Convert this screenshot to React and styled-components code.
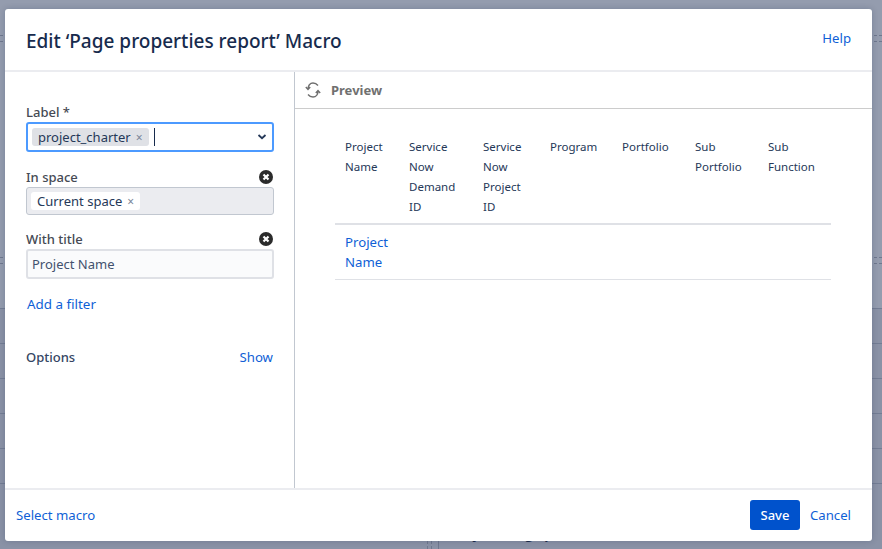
import React from 'react'
import styled, { createGlobalStyle } from 'styled-components'

const Global = createGlobalStyle`
    html, body {
        margin: 0;
        padding: 0;
        height: 100%;
        overflow: hidden;
    }
    body {
        font-family: "Noto Sans", "Open Sans", sans-serif;
        color: #253858;
    }
`

const Backdrop = styled.div`
    position: relative;
    width: 882px;
    height: 549px;
    background: #949cae;
    padding: 9px 10px 8px 5px;
    box-sizing: border-box;
    overflow: hidden;
`

// the page that sits greyed out behind the dialog
const PageBehind = styled.div`
    position: absolute;
    inset: 0;
`

const Dashes = styled.div`
    position: absolute;
    left: 0;
    right: 0;
    top: ${props => props.y}px;
    height: 5px;
    border-top: 1px dashed #6f788e;
    border-bottom: 1px dashed #6f788e;
`

const Rows = styled.div`
    position: absolute;
    left: 0;
    right: 0;
    top: 308px;
    bottom: 0;
    background: #8a92a6;
`

const Row = styled.div`
    height: 34px;
    border-top: 1px solid #737d94;
`

const BehindText = styled.span`
    position: absolute;
    left: 455px;
    top: 522px;
    font-size: 14px;
    font-weight: 700;
    line-height: 24px;
    color: #1c2b4a;
    white-space: nowrap;
`

const Rule = styled.div`
    position: absolute;
    top: 541px;
    bottom: 0;
    left: ${props => props.x}px;
    border-left: 1px ${props => props.dashed ? 'dashed' : 'solid'} #6f788e;
`

const Dialog = styled.div`
    position: relative;
    display: flex;
    flex-direction: column;
    height: 100%;
    background: #fff;
    border-radius: 3px;
    box-shadow: 0 0 6px rgba(9, 30, 66, 0.2);
    overflow: hidden;
`

const Header = styled.header`
    display: flex;
    justify-content: space-between;
    align-items: center;
    height: 58px;
    padding: 3px 21px 0;
    border-bottom: 2px solid #ebecf0;
    flex: none;
`

const Title = styled.h2`
    margin: 0;
    font-size: 19px;
    font-weight: 500;
    color: #172b4d;
`

const Link = styled.a`
    font-size: 13.2px;
    font-weight: 400;
    color: #0f5fd6;
    cursor: pointer;
`

const HelpLink = styled(Link)`
    margin-bottom: 7px;
`

const FilterLink = styled(Link)`
    display: block;
    margin: 16px 0 0 1px;
    font-size: 13.4px;
`

const Body = styled.div`
    display: flex;
    flex: 1;
    min-height: 0;
`

const Sidebar = styled.aside`
    width: 290px;
    flex: none;
    box-sizing: border-box;
    border-right: 1px solid #c1c7d0;
    padding: 30px 20px 0 21px;
`

const FieldHead = styled.div`
    display: flex;
    justify-content: space-between;
    align-items: center;
    height: 20px;
    font-size: 13px;
    font-weight: 500;
    color: #454a54;
`

const Field = styled.div`
    margin-bottom: ${props => props.gap || 0}px;
`

const Select = styled.div`
    display: flex;
    align-items: center;
    justify-content: space-between;
    height: 30px;
    box-sizing: border-box;
    padding: 0 5px 0 4px;
    border: 2px solid #4c9aff;
    border-radius: 3px;
    background: #fff;
`

const Disabled = styled.div`
    display: flex;
    align-items: center;
    height: 28px;
    box-sizing: border-box;
    padding: 0 4px;
    border: 1px solid #c1c7d0;
    border-radius: 3px;
    background: #ebecf0;
`

const Input = styled.div`
    display: flex;
    align-items: center;
    height: 30px;
    box-sizing: border-box;
    padding: 0 4px;
    border: 2px solid #dfe1e6;
    border-radius: 3px;
    background: #fafbfc;
    font-size: 13px;
    color: #42526e;
`

const Tag = styled.span`
    display: inline-flex;
    align-items: center;
    gap: 5px;
    height: 18px;
    padding: 0 6px;
    border-radius: 3px;
    font-size: 13px;
    color: #253858;
    background: ${props => props.plain ? '#fff' : '#dfe1e6'};
`

const TagClose = styled.span`
    font-size: 12px;
    color: #7a869a;
`

const Cursor = styled.span`
    width: 1px;
    height: 18px;
    margin-left: 5px;
    background: #172b4d;
`

const Left = styled.div`
    display: flex;
    align-items: center;
`

const Options = styled.div`
    display: flex;
    justify-content: space-between;
    align-items: center;
    margin-top: 35px;
    padding-right: 1px;
    font-size: 13px;
    font-weight: 500;
    color: #344563;
`

const Main = styled.main`
    flex: 1;
    min-width: 0;
`

const PreviewBar = styled.div`
    display: flex;
    align-items: center;
    gap: 10px;
    height: 36px;
    padding: 0 10px;
    border-bottom: 1px solid #cccccc;
    font-size: 13px;
    font-weight: 700;
    color: #707070;
`

const Table = styled.table`
    border-collapse: collapse;
    table-layout: fixed;
    width: 496px;
    margin: 28px 0 0 40px;
    font-size: 11.5px;
    line-height: 20px;
`

const Th = styled.th`
    width: ${props => props.w}px;
    padding: 0 10px 6px;
    box-sizing: border-box;
    text-align: left;
    vertical-align: top;
    font-weight: 400;
    color: #253858;
    border-bottom: 2px solid #dfe1e6;
`

const Td = styled.td`
    padding: 7px 10px;
    font-size: 13.2px;
    color: #0f5fd6;
    border-bottom: 1px solid #dfe1e6;
`

const Footer = styled.footer`
    display: flex;
    justify-content: space-between;
    align-items: center;
    flex: none;
    height: 50px;
    padding: 0 21px 1px 11px;
    border-top: 2px solid #ebecf0;
`

const Actions = styled.div`
    display: flex;
    align-items: center;
    gap: 10px;
`

const Save = styled.button`
    width: 50px;
    height: 30px;
    border: 0;
    border-radius: 3px;
    background: #0052cc;
    color: #fff;
    font: 500 13px "Noto Sans", sans-serif;
`

const Glyph = styled.svg`
    display: block;
    flex: none;
`

const ClearGlyph = styled(Glyph)`
    margin-right: 1px;
`

const ClearIcon = () => (
    <ClearGlyph width="14" height="14" viewBox="0 0 14 14">
        <circle cx="7" cy="7" r="7" fill="#2b2b2b" />
        <path d="M4.5 4.5l5 5M9.5 4.5l-5 5" stroke="#fff" strokeWidth="2.2" />
    </ClearGlyph>
)

const Chevron = () => (
    <Glyph width="10" height="6" viewBox="0 0 10 6">
        <path d="M1.5 1l3.5 3.2L8.5 1" fill="none" stroke="#253858" strokeWidth="1.8" />
    </Glyph>
)

const Refresh = () => (
    <Glyph width="16" height="16" viewBox="0 0 16 16">
        <path d="M13 3.5C11.8 2 10 1 8 1 5 1 3 3.5 3 7M.8 5L3 7.5 5.2 5" fill="none" stroke="#707070" strokeWidth="1.4" />
        <path d="M3 12.5C4.2 14 6 15 8 15c3 0 5-2.5 5-6M10.8 11L13 8.5l2.2 2.5" fill="none" stroke="#707070" strokeWidth="1.4" />
    </Glyph>
)

const columns = [
    { w: 64, lines: ['Project', 'Name'] },
    { w: 74, lines: ['Service', 'Now', 'Demand', 'ID'] },
    { w: 67, lines: ['Service', 'Now', 'Project', 'ID'] },
    { w: 72, lines: ['Program'] },
    { w: 73, lines: ['Portfolio'] },
    { w: 73, lines: ['Sub', 'Portfolio'] },
    { w: 73, lines: ['Sub', 'Function'] },
]

export default function App() {
    return (
        <Backdrop>
            <Global />
            <PageBehind>
                <Dashes y={35} />
                <Dashes y={257} />
                <Rows>
                    {[0, 1, 2, 3, 4, 5].map(i => <Row key={i} />)}
                </Rows>
                <BehindText>Key findings p</BehindText>
                <Rule x={427} dashed />
                <Rule x={431} dashed />
                <Rule x={438} />
            </PageBehind>
            <Dialog>
                <Header>
                    <Title>Edit ‘Page properties report’ Macro</Title>
                    <HelpLink>Help</HelpLink>
                </Header>
                <Body>
                    <Sidebar>
                        <Field gap={15}>
                            <FieldHead>Label *</FieldHead>
                            <Select>
                                <Left>
                                    <Tag>project_charter <TagClose>×</TagClose></Tag>
                                    <Cursor />
                                </Left>
                                <Chevron />
                            </Select>
                        </Field>
                        <Field gap={14}>
                            <FieldHead>In space <ClearIcon /></FieldHead>
                            <Disabled>
                                <Tag plain>Current space <TagClose>×</TagClose></Tag>
                            </Disabled>
                        </Field>
                        <Field>
                            <FieldHead>With title <ClearIcon /></FieldHead>
                            <Input>Project Name</Input>
                        </Field>
                        <FilterLink>Add a filter</FilterLink>
                        <Options>Options <Link>Show</Link></Options>
                    </Sidebar>
                    <Main>
                        <PreviewBar><Refresh />Preview</PreviewBar>
                        <Table>
                            <thead>
                                <tr>
                                    {columns.map(col => (
                                        <Th key={col.lines.join()} w={col.w}>
                                            {col.lines.map(line => <div key={line}>{line}</div>)}
                                        </Th>
                                    ))}
                                </tr>
                            </thead>
                            <tbody>
                                <tr>
                                    <Td>Project Name</Td>
                                    <Td /><Td /><Td /><Td /><Td /><Td />
                                </tr>
                            </tbody>
                        </Table>
                    </Main>
                </Body>
                <Footer>
                    <Link>Select macro</Link>
                    <Actions>
                        <Save>Save</Save>
                        <Link>Cancel</Link>
                    </Actions>
                </Footer>
            </Dialog>
        </Backdrop>
    )
}
